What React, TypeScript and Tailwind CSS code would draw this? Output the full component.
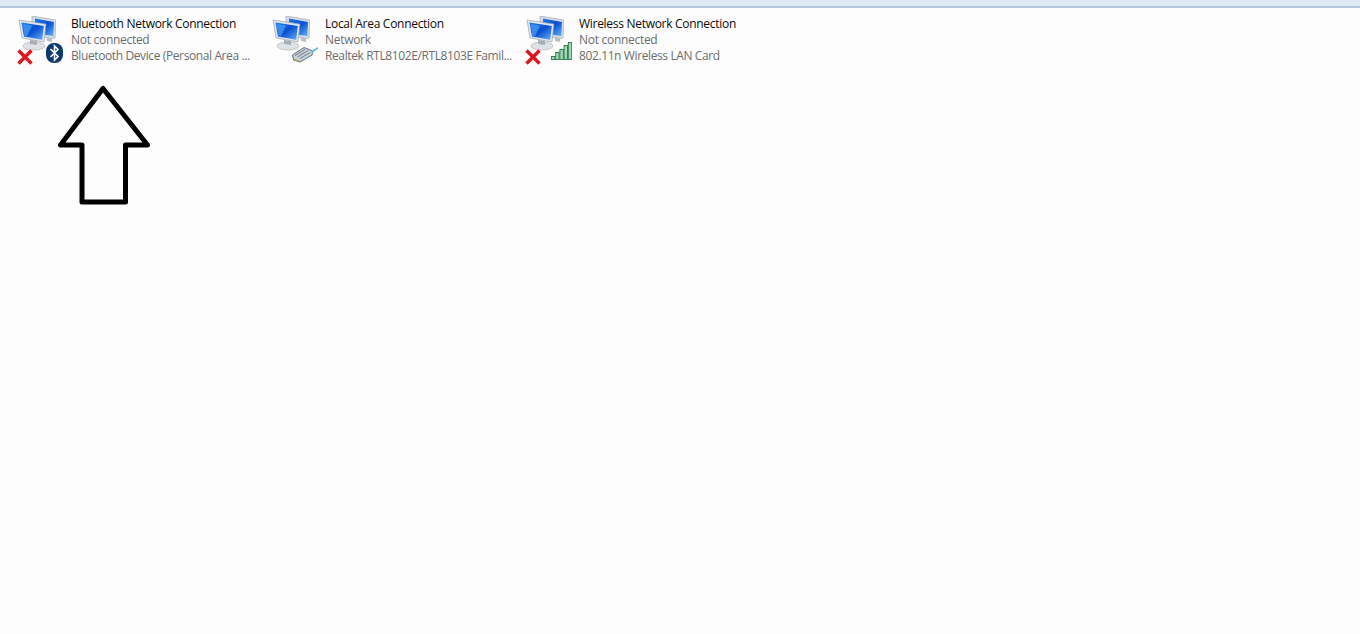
import React from 'react';

function Monitors() {
    return (
        <svg width="38" height="38" viewBox="0 0 38 38" className="absolute left-0 top-0">
            <defs>
                <linearGradient id="scr" x1="0" y1="0" x2="1" y2="1">
                    <stop offset="0" stopColor="#1e7bec" />
                    <stop offset="0.5" stopColor="#0a4fd2" />
                    <stop offset="1" stopColor="#63b4f2" />
                </linearGradient>
            </defs>
            {/* back monitor */}
            <path d="M14 0 L38 4 L37 22 L32 23 L14 17 Z" fill="#d6dce2" stroke="#97a2ad" strokeWidth="0.6" />
            <path d="M17 2.5 L36 6 L35.3 20 L28 19 L17 15 Z" fill="url(#scr)" />
            <path d="M29 21 L34 22 L34 26 L29 25 Z" fill="#b9bfc5" />
            {/* front monitor */}
            <ellipse cx="16" cy="30" rx="11" ry="4" fill="#e0e3e6" stroke="#a6abb0" strokeWidth="0.6" />
            <path d="M12 24 L19 25 L19 29 L12 28 Z" fill="#a9afb5" />
            <path d="M1 4 L28 8 L26 26 L4 22 Z" fill="#dfe4e9" stroke="#8f9aa5" strokeWidth="0.6" />
            <path d="M3.5 6.5 L25.8 10 L24.2 23.8 L6 20.5 Z" fill="url(#scr)" />
            <path d="M5 8 L14 9.5 L9 20.5 L6.3 20 Z" fill="#55a9f5" opacity="0.6" />
        </svg>
    );
}

function RedX() {
    return (
        <svg width="16" height="16" viewBox="0 0 16 16" className="absolute left-[-1px] top-[33px]">
            <path d="M1.5 1.5 L14.5 14.5 M14.5 1.5 L1.5 14.5" stroke="#e0141c" strokeWidth="3.4" />
        </svg>
    );
}

function BluetoothBadge() {
    return (
        <svg width="17" height="20" viewBox="0 0 17 20" className="absolute left-[28px] top-[27px]">
            <rect x="0" y="0" width="17" height="20" rx="8" fill="#0b3a6e" />
            <path d="M4.5 6 L12 13.5 L8.5 17 L8.5 3 L12 6.5 L4.5 14" fill="none" stroke="#ffffff" strokeWidth="1.6" />
        </svg>
    );
}

function EthernetPlug() {
    return (
        <svg width="26" height="18" viewBox="0 0 26 18" className="absolute left-[20px] top-[29px]">
            <path d="M0.5 10 L12 2.5 L21 6 L20 10 L8 17 L1.5 15 Z" fill="#c9d1d8" stroke="#55626d" strokeWidth="0.9" />
            <path d="M3 10.5 L13 4.5 M5.5 12 L16 5.5 M8 13.5 L18 7.5" stroke="#6f7d89" strokeWidth="1" />
            <path d="M2.5 14 L7.5 15.5 L7 16.5 L2.5 15.2 Z" fill="#c9a94f" />
            <path d="M19 6 L26 2 L26 4 L20 8 Z" fill="#62bde8" />
        </svg>
    );
}

function SignalBars() {
    const bars = [
        { x: 0, h: 3 },
        { x: 4.2, h: 7 },
        { x: 8.4, h: 10 },
        { x: 12.6, h: 14 },
        { x: 16.8, h: 17 },
    ];
    return (
        <svg width="21" height="18" viewBox="0 0 21 18" className="absolute left-[25px] top-[26px]">
            {bars.map((b) => (
                <rect key={b.x} x={b.x + 0.5} y={17.5 - b.h} width="3.4" height={b.h} fill="#a8d8b6" stroke="#23774a" strokeWidth="0.9" />
            ))}
        </svg>
    );
}

const items = [
    { name: 'Bluetooth Network Connection', status: 'Not connected', device: 'Bluetooth Device (Personal Area ...', failed: true, badge: <BluetoothBadge /> },
    { name: 'Local Area Connection', status: 'Network', device: 'Realtek RTL8102E/RTL8103E Famil...', failed: false, badge: <EthernetPlug /> },
    { name: 'Wireless Network Connection', status: 'Not connected', device: '802.11n Wireless LAN Card', failed: true, badge: <SignalBars /> },
];

export default function App() {
    return (
        <div className="flex h-[634px] w-[1360px] flex-col overflow-hidden bg-[#fdfdfd] font-['Open_Sans',sans-serif]">
            <div className="h-[8px] border-b-2 border-[#b5c6dc] bg-[#dfe9f6]" />
            <div className="relative flex-1">
                <div className="flex pl-[18px] pt-[8px]">
                    {items.map((item) => (
                        <div key={item.name} className="flex w-[254px]">
                            <div className="relative h-[48px] w-[53px] shrink-0">
                                <Monitors />
                                {item.failed && <RedX />}
                                {item.badge}
                            </div>
                            <div className="whitespace-nowrap text-[12px] leading-[16px] tracking-[-0.29px]">
                                <div className="text-[#0b0b0b]">{item.name}</div>
                                <div className="text-[#6d6d6d]">{item.status}</div>
                                <div className="tracking-[-0.39px] text-[#6d6d6d]">{item.device}</div>
                            </div>
                        </div>
                    ))}
                </div>
                <svg width="100" height="130" viewBox="0 0 100 130" className="absolute left-[55px] top-[76px]">
                    <path d="M48 4.5 L5.5 61 H27 V118 H70.5 V61 H92.5 Z" fill="none" stroke="#000000" strokeWidth="5" strokeLinejoin="round" />
                </svg>
            </div>
        </div>
    );
}
